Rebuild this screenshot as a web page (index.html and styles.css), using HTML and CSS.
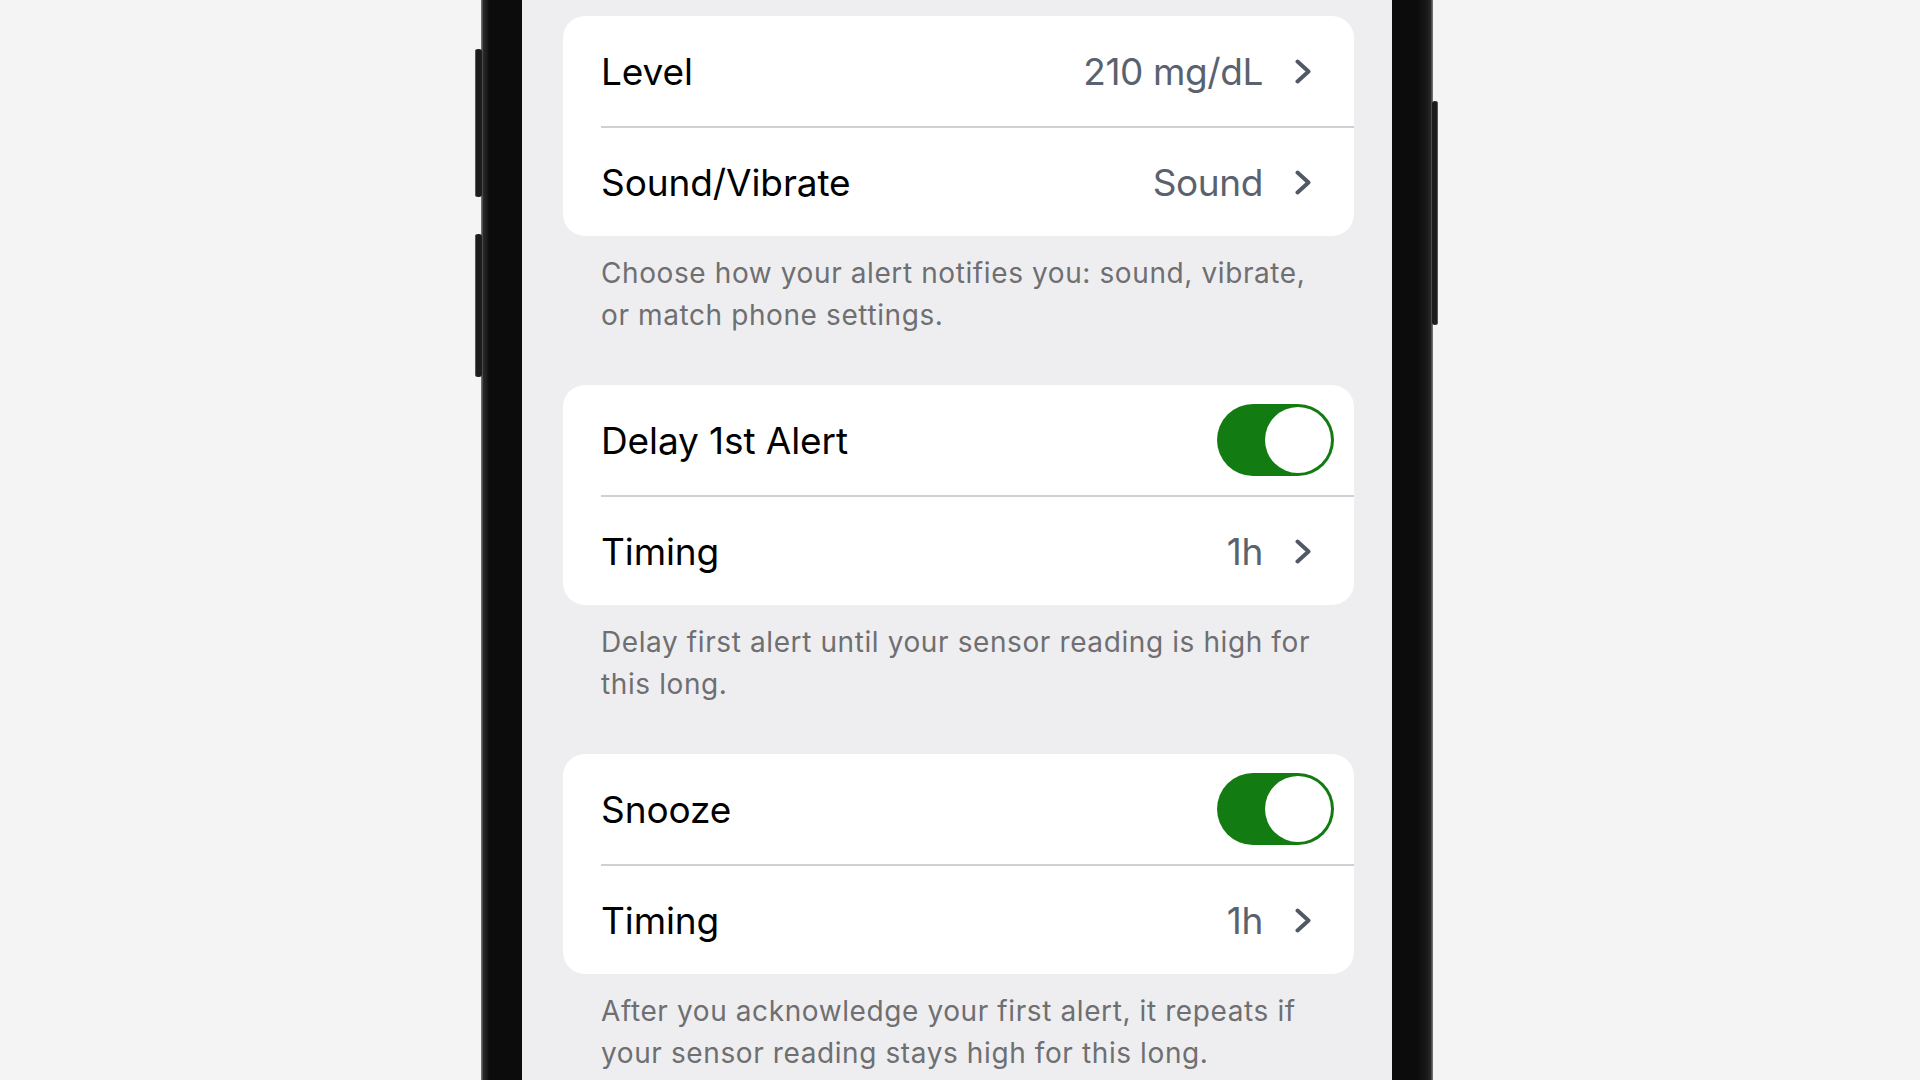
FILE: index.html
```html
<!DOCTYPE html>
<html lang="en">
<head>
<meta charset="utf-8">
<title>High Alert Settings</title>
<link rel="stylesheet" href="styles.css">
</head>
<body>
<div class="stage">
  <div class="phone">
    <span class="btn btn-l1"></span>
    <span class="btn btn-l2"></span>
    <span class="btn btn-r1"></span>
    <div class="screen">
      <section class="group">
        <div class="card">
          <div class="row">
            <span class="label">Level</span>
            <span class="value">210 mg/dL</span>
            <svg class="chev" viewBox="0 0 16 25" width="16" height="25"><polyline points="2.5,2.5 13.5,12.5 2.5,22.5"/></svg>
          </div>
          <div class="row">
            <span class="label">Sound/Vibrate</span>
            <span class="value">Sound</span>
            <svg class="chev" viewBox="0 0 16 25" width="16" height="25"><polyline points="2.5,2.5 13.5,12.5 2.5,22.5"/></svg>
          </div>
        </div>
        <p class="footer">Choose how your alert notifies you: sound, vibrate,<br>or match phone settings.</p>
      </section>
      <section class="group">
        <div class="card">
          <div class="row">
            <span class="label">Delay 1st Alert</span>
            <span class="toggle"><span class="knob"></span></span>
          </div>
          <div class="row">
            <span class="label">Timing</span>
            <span class="value">1h</span>
            <svg class="chev" viewBox="0 0 16 25" width="16" height="25"><polyline points="2.5,2.5 13.5,12.5 2.5,22.5"/></svg>
          </div>
        </div>
        <p class="footer">Delay first alert until your sensor reading is high for<br>this long.</p>
      </section>
      <section class="group">
        <div class="card">
          <div class="row">
            <span class="label">Snooze</span>
            <span class="toggle"><span class="knob"></span></span>
          </div>
          <div class="row">
            <span class="label">Timing</span>
            <span class="value">1h</span>
            <svg class="chev" viewBox="0 0 16 25" width="16" height="25"><polyline points="2.5,2.5 13.5,12.5 2.5,22.5"/></svg>
          </div>
        </div>
        <p class="footer">After you acknowledge your first alert, it repeats if<br>your sensor reading stays high for this long.</p>
      </section>
    </div>
  </div>
</div>
</body>
</html>
```

FILE: styles.css
```css
html, body {
  margin: 0;
  padding: 0;
  height: 100%;
  overflow: hidden;
}
body {
  background: #f4f4f4;
  font-family: "Inter", "Noto Sans", "Liberation Sans", sans-serif;
}
.stage {
  display: flex;
  height: 1080px;
  padding-left: 481px;
}
.phone {
  position: relative;
  display: flex;
  width: 952px;
  height: 1080px;
  box-sizing: border-box;
  padding: 0 41px;
  background: linear-gradient(to right, #6e6e6e 0, #6e6e6e 1px, #2a2a2a 2px, #1a1a1a 6px, #0c0c0c 8px, #0c0c0c 936px, #1a1a1a 946px, #2a2a2a 950px, #6e6e6e 951px);
}
.btn {
  position: absolute;
  width: 7px;
  background: #1c1c1c;
  border-radius: 3px;
  box-shadow: inset 1px 0 0 #555;
}
.btn-l1 { left: -6px; top: 49px; height: 148px; }
.btn-l2 { left: -6px; top: 234px; height: 143px; }
.btn-r1 { right: -5px; top: 101px; height: 224px; width: 6px; box-shadow: inset -1px 0 0 #555; }

.screen {
  flex: 1;
  background: #eeeef0;
  padding: 16px 38px 0 41px;
  box-sizing: border-box;
  display: flex;
  flex-direction: column;
}
.group {
  display: flex;
  flex-direction: column;
}
.card {
  background: #ffffff;
  border-radius: 22px;
  display: flex;
  flex-direction: column;
}
.row {
  height: 110px;
  display: flex;
  align-items: center;
  margin-left: 38px;
  padding-right: 43px;
  box-sizing: border-box;
}
.row + .row {
  border-top: 2px solid #d0d0d3;
  height: 110px;
}
.label {
  flex: 1;
  font-size: 37px;
  color: #000;
  letter-spacing: -0.1px;
}
.value {
  font-size: 37px;
  color: #5a6270;
  letter-spacing: -0.4px;
  margin-right: 32px;
}
.chev {
  display: block;
  fill: none;
  stroke: #525966;
  stroke-width: 4;
  stroke-linecap: round;
  stroke-linejoin: round;
}
.toggle {
  width: 117px;
  height: 72px;
  border-radius: 36px;
  background: #127b12;
  display: flex;
  align-items: center;
  justify-content: flex-end;
  padding: 0 3px;
  box-sizing: border-box;
  margin-right: -23px;
}
.knob {
  width: 66px;
  height: 66px;
  border-radius: 50%;
  background: #fff;
}
.footer {
  margin: 0 0 49px 0;
  padding: 16px 0 0 38px;
  font-size: 28px;
  line-height: 42px;
  letter-spacing: 0.6px;
  color: #6f6f72;
  white-space: nowrap;
}
```
